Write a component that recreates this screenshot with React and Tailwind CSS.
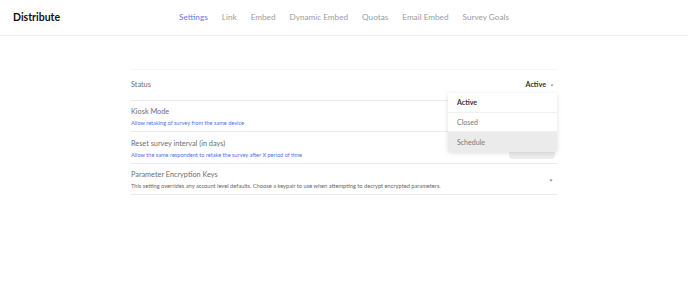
import { useState } from "react";

const tabs = ["Settings", "Link", "Embed", "Dynamic Embed", "Quotas", "Email Embed", "Survey Goals"];

function Caret({ className }) {
  return (
    <svg viewBox="0 0 6 4" className={className}>
      <path d="M0.5 0.5 L5.5 0.5 L3 3.5 Z" fill="currentColor" />
    </svg>
  );
}

export default function App() {
  const [status, setStatus] = useState("Active");
  const options = ["Active", "Closed", "Schedule"];

  return (
    <div className="w-[688px] h-[290px] bg-white font-['Lato',sans-serif] overflow-hidden">
      {/* HEADER */}
      <div className="h-[36px] border-b border-[#f1f1f1] grid grid-cols-[1fr_auto_1fr] items-center">
        <div className="pl-[13px] text-[10.5px] font-bold text-[#111]">Distribute</div>
        <nav className="flex gap-[14px] text-[8.2px]">
          {tabs.map((t) => (
            <span key={t} className={t === "Settings" ? "text-[#5c80e8]" : "text-[#9c9c9c]"}>
              {t}
            </span>
          ))}
        </nav>
        <div />
      </div>

      {/* SETTINGS LIST */}
      <div className="w-[426px] mx-auto pt-[33px]">
        <div className="border-t border-[#f5f5f5]">
          {/* STATUS */}
          <div className="relative h-[31px] border-b border-[#ebebeb] flex items-center justify-between pt-[1px]">
            <span className="text-[7.3px] text-[#6e6e6e]">Status</span>
            <button className="flex items-center gap-[4px] pr-[3px] text-[7.2px] font-bold text-[#333]">
              {status}
              <Caret className="w-[4px] h-[3px] text-[#999]" />
            </button>

            <div className="absolute right-0 top-[23px] z-10 w-[109px] bg-white rounded-[2px] shadow-[0_1px_5px_rgba(0,0,0,0.13)] overflow-hidden">
              {options.map((o, i) => (
                <div
                  key={o}
                  onClick={() => setStatus(o)}
                  className={`h-[19.5px] pl-[9px] flex items-center text-[7px] ${
                    i < options.length - 1 ? "border-b border-[#f0f0f0]" : ""
                  } ${o === "Schedule" ? "bg-[#ebebeb] text-[#666]" : ""} ${
                    o === status ? "font-bold text-[#333]" : "text-[#777]"
                  }`}
                >
                  {o}
                </div>
              ))}
            </div>
          </div>

          {/* KIOSK */}
          <div className="h-[31px] border-b border-[#ebebeb] flex flex-col justify-center pt-[3px]">
            <span className="text-[7.3px] leading-[10px] text-[#6e6e6e]">Kiosk Mode</span>
            <span className="text-[5.6px] leading-[11px] text-[#4a76e2]">Allow retaking of survey from the same device</span>
          </div>

          {/* RESET INTERVAL */}
          <div className="h-[32px] border-b border-[#ebebeb] flex items-center justify-between pt-[3px]">
            <div className="flex flex-col">
              <span className="text-[7.3px] leading-[10px] text-[#6e6e6e]">Reset survey interval (in days)</span>
              <span className="text-[5.6px] leading-[11px] text-[#4a76e2]">
                Allow the same respondent to retake the survey after X period of time
              </span>
            </div>
            <div className="w-[46px] h-[20px] mr-[2px] rounded-[4px] bg-[#ececec]" />
          </div>

          {/* PARAMETER KEYS */}
          <div className="h-[31px] border-b border-[#ebebeb] flex items-center justify-between pt-[3px]">
            <div className="flex flex-col">
              <span className="text-[7.3px] leading-[10px] text-[#6e6e6e]">Parameter Encryption Keys</span>
              <span className="text-[5.7px] leading-[11px] text-[#666]">
                This setting overrides any account level defaults. Choose a keypair to use when attempting to decrypt
                encrypted parameters.
              </span>
            </div>
            <Caret className="w-[4px] h-[3px] mr-[4px] text-[#888]" />
          </div>
        </div>
      </div>
    </div>
  );
}
